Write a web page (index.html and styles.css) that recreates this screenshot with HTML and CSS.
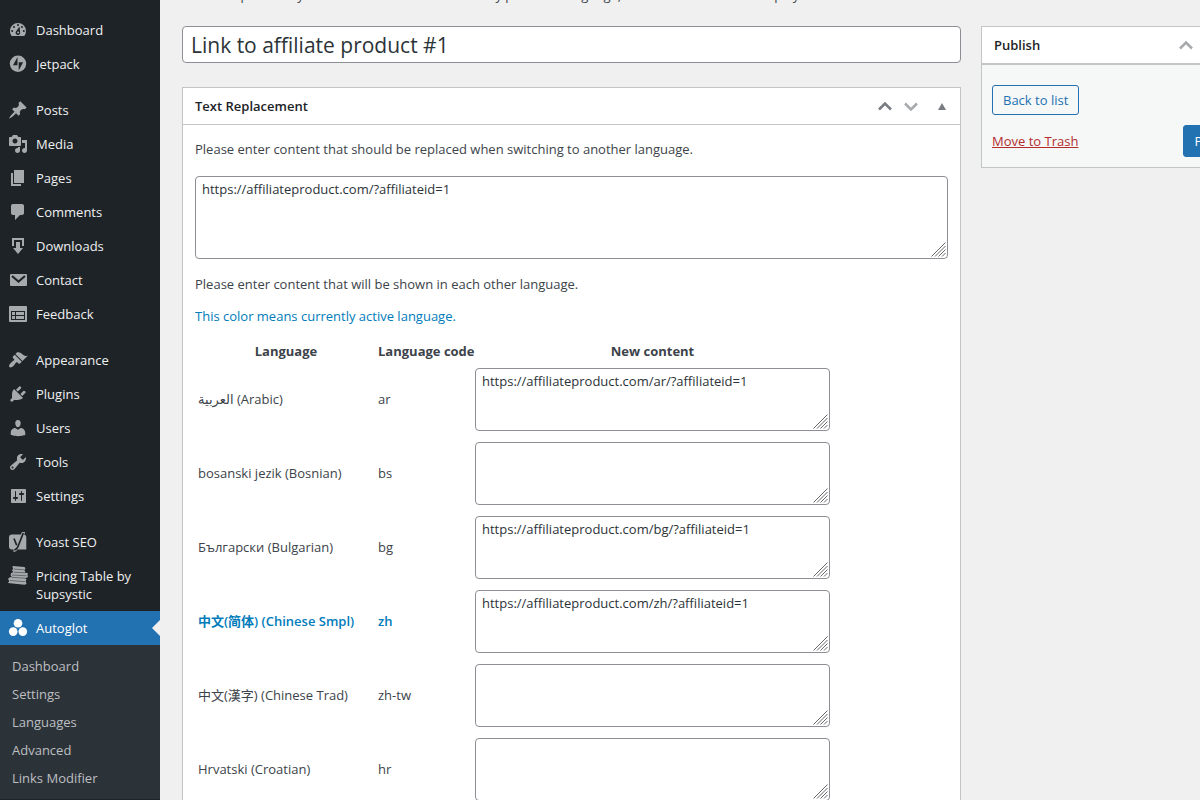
FILE: index.html
```html
<!DOCTYPE html>
<html lang="en">
<head>
<meta charset="utf-8">
<title>Link to affiliate product #1</title>
<link rel="stylesheet" href="styles.css">
</head>
<body>
<svg class="defs" aria-hidden="true">
  <symbol id="grip" viewBox="0 0 15 15"><path d="M0.5 14.5L14.5 .5M4 14.5L14.5 4M7.500 14.5L14.5 7.500M11 14.5L14.5 11"/></symbol>
  <symbol id="chev-up" viewBox="0 0 14 10"><path d="M1 8.5L7 2.5L13 8.5"/></symbol>
  <symbol id="chev-down" viewBox="0 0 14 10"><path d="M1 2.5L7 8.5L13 2.5"/></symbol>
  <symbol id="tri" viewBox="0 0 8 7"><path d="M4 0L8 7H0z"/></symbol>
</svg>
<div class="shell">
  <nav class="menu" aria-label="Main menu">
    <ul class="menu-list">
      <li><a class="item" href="#"><svg class="icon" viewBox="0 0 20 20"><path d="M3.76 16h12.48A7.96 7.96 0 0 0 18 11a8 8 0 0 0-16 0c0 1.89.66 3.63 1.76 5z"/><g class="cut"><circle cx="10" cy="5" r="1"/><circle cx="6" cy="7" r="1"/><circle cx="14" cy="7" r="1"/><circle cx="4.2" cy="11" r="1"/><circle cx="15.8" cy="11" r="1"/><path d="M11.6 6.5l.5 5.8a2.3 2.3 0 1 1-4-1.1z"/></g><circle cx="10.1" cy="12.4" r="1"/></svg><span>Dashboard</span></a></li>
      <li><a class="item" href="#"><svg class="icon" viewBox="0 0 20 20"><circle cx="10" cy="9.7" r="8.2"/><path class="cut" d="M9.500 3v8.300H5zM10.700 16.500V8.200h4.400z"/></svg><span>Jetpack</span></a></li>
      <li class="gap"><a class="item" href="#"><svg class="icon" viewBox="0 0 20 20"><path d="M10.44 3.02l1.82-1.82 6.36 6.35-1.83 1.82c-1.05-.68-2.48-.57-3.41.36l-.75.75c-.92.93-1.04 2.35-.35 3.41l-1.83 1.82-2.41-2.41-2.8 2.79c-.42.42-3.38 2.71-3.8 2.29s1.86-3.39 2.28-3.81l2.79-2.79L4.1 9.36l1.83-1.82c1.05.69 2.48.57 3.4-.36l.75-.75c.93-.92 1.05-2.35.36-3.41z"/></svg><span>Posts</span></a></li>
      <li><a class="item" href="#"><svg class="icon" viewBox="0 0 20 20"><path d="M13 11V4c0-.55-.45-1-1-1h-1.67L9 1H5L3.67 3H2c-.55 0-1 .45-1 1v7c0 .55.45 1 1 1h10c.55 0 1-.45 1-1zM7 4.5c1.38 0 2.5 1.12 2.5 2.5S8.38 9.5 7 9.5 4.5 8.38 4.5 7 5.62 4.5 7 4.5zM14 6h5v10.5c0 1.38-1.12 2.5-2.5 2.5S14 17.88 14 16.5s1.12-2.5 2.5-2.5c.17 0 .34.02.5.05V9h-3V6zm-4 8.05V13h2v3.5c0 1.38-1.12 2.5-2.5 2.5S7 17.88 7 16.5 8.12 14 9.5 14c.17 0 .34.02.5.05z"/></svg><span>Media</span></a></li>
      <li><a class="item" href="#"><svg class="icon" viewBox="0 0 20 20"><path d="M6 15V2h10v13H6zm-1 1h8v2H3V5h2v11z"/></svg><span>Pages</span></a></li>
      <li><a class="item" href="#"><svg class="icon" viewBox="0 0 20 20"><path d="M5 2h9c1.1 0 2 .9 2 2v7c0 1.1-.9 2-2 2h-2l-5 5v-5H5c-1.1 0-2-.9-2-2V4c0-1.1.9-2 2-2z"/></svg><span>Comments</span></a></li>
      <li><a class="item" href="#"><svg class="icon" viewBox="0 0 20 20"><path d="M14.01 4v6h2V2H4v8h2.01V4h8zm-2 2v6h3l-5 6-5-6h3V6h4z"/></svg><span>Downloads</span></a></li>
      <li><a class="item" href="#"><svg class="icon" viewBox="0 0 20 20"><rect x="2" y="4" width="17" height="12" rx="1"/><path class="cut-line" d="M4 6l6.5 5.6L17 6"/></svg><span>Contact</span></a></li>
      <li><a class="item" href="#"><svg class="icon" viewBox="0 0 20 20"><path fill-rule="evenodd" d="M2 2h16c.55 0 1 .45 1 1v14c0 .55-.45 1-1 1H2c-.55 0-1-.45-1-1V3c0-.55.45-1 1-1zm1 5v9h14V7zM4 8h3v3H4zm4 0h8v3H8zm-4 4h3v3H4zm4 0h8v3H8z"/></svg><span>Feedback</span></a></li>
      <li class="gap"><a class="item" href="#"><svg class="icon" viewBox="0 0 20 20"><path d="M14.48 11.06L7.41 3.99l1.5-1.5c.5-.56 2.3-.47 3.51.32 1.21.8 1.43 1.28 2.91 2.1 1.18.64 2.45 1.26 4.45.85zm-.71.71L6.7 4.7 4.93 6.47c-.39.39-.39 1.02 0 1.41l1.06 1.06c.39.39.39 1.03 0 1.42-.6.6-1.43 1.11-2.21 1.69-.35.26-.7.53-1.01.84C1.43 14.23.4 16.08 1.4 17.07c.99 1 2.84-.03 4.18-1.36.31-.31.58-.66.85-1.02.57-.78 1.08-1.61 1.69-2.21.39-.39 1.02-.39 1.41 0l1.06 1.06c.39.39 1.02.39 1.41 0z"/></svg><span>Appearance</span></a></li>
      <li><a class="item" href="#"><svg class="icon" viewBox="0 0 20 20"><path d="M13.11 4.36L9.87 7.6 8 5.73l3.24-3.24c.35-.34 1.05-.2 1.56.32.52.51.66 1.21.31 1.55zm-8 1.77l.91-1.12 9.01 9.01-1.19.84c-.71.71-2.63 1.16-3.82 1.16H6.14L4.9 17.26c-.59.59-1.54.59-2.12 0-.59-.58-.59-1.53 0-2.12l1.24-1.24v-3.88c0-1.13.4-3.19 1.09-3.89zm7.26 3.97l3.24-3.24c.34-.35 1.04-.21 1.55.31.52.51.66 1.21.31 1.55l-3.24 3.25z"/></svg><span>Plugins</span></a></li>
      <li><a class="item" href="#"><svg class="icon" viewBox="0 0 20 20"><path d="M10 9.25c-2.27 0-2.73-3.44-2.73-3.44C7 4.02 7.82 2 9.97 2c2.16 0 2.98 2.02 2.71 3.81 0 0-.41 3.44-2.68 3.44zm0 2.57L12.72 10c2.39 0 4.52 2.33 4.52 4.53v2.49s-3.65 1.13-7.24 1.13c-3.65 0-7.24-1.13-7.24-1.13v-2.49c0-2.25 1.94-4.48 4.47-4.48z"/></svg><span>Users</span></a></li>
      <li><a class="item" href="#"><svg class="icon" viewBox="0 0 20 20"><path d="M16.68 9.77c-1.34 1.34-3.3 1.67-4.95.99l-5.41 6.52c-.99.99-2.59.99-3.58 0s-.99-2.59 0-3.57l6.52-5.42c-.68-1.65-.35-3.61.99-4.95 1.28-1.28 3.12-1.62 4.72-1.06l-2.89 2.89 2.82 2.82 2.86-2.87c.53 1.58.18 3.39-1.08 4.65zM3.81 16.21c.4.39 1.04.39 1.43 0 .4-.4.4-1.04 0-1.43-.39-.4-1.03-.4-1.43 0-.39.39-.39 1.03 0 1.43z"/></svg><span>Tools</span></a></li>
      <li><a class="item" href="#"><svg class="icon" viewBox="0 0 20 20"><path d="M18 16V4c0-.55-.45-1-1-1H4c-.55 0-1 .45-1 1v12c0 .55.45 1 1 1h13c.55 0 1-.45 1-1zM8 11h1c.55 0 1 .45 1 1s-.45 1-1 1H8v1.5c0 .28-.22.5-.5.5s-.5-.22-.5-.5V13H6c-.55 0-1-.45-1-1s.45-1 1-1h1V5.5c0-.28.22-.5.5-.5s.5.22.5.5V11zm5-2h-1c-.55 0-1-.45-1-1s.45-1 1-1h1V5.5c0-.28.22-.5.5-.5s.5.22.5.5V7h1c.55 0 1 .45 1 1s-.45 1-1 1h-1v5.5c0 .28-.22.5-.5.5s-.5-.22-.5-.5V9z"/></svg><span>Settings</span></a></li>
      <li class="gap"><a class="item" href="#"><svg class="icon" viewBox="0 0 20 20"><path d="M4 2.500h8.800L14 0h3.200l-1 2.600C17.600 3 18.300 4 18.300 5.500V17.500H9.500C8.700 19 7.500 19.800 5.500 20v-2.500H4a3 3 0 0 1-3-3v-9a3 3 0 0 1 3-3z"/><path class="cut-line thin" d="M6 6.500l2.700 6.800M15.300 1L10 14.500C9.200 16.600 8.300 17.700 6.300 18"/></svg><span>Yoast SEO</span></a></li>
      <li><a class="item" href="#"><svg class="icon" viewBox="0 0 20 20"><path d="M4.500 0l12 1 1 1.500-1.200 1.500 1 1.500-.8 1 3.500.8-.6 1.500.6 2-1.200 1L17 12l1.500 1.500-.8 1.500.8 3-2 .8L0 17l1.200-2L0 12.700l2-1.400 1.700-.3L2.500 9l.8-2 2.200-1L4 4.500 5 3z"/><path class="seam" d="M5.500 3l10.500.8M6 6.300l11 .4M4 9l14.500.8M3.500 11.300l13.500.9M2 14.500l15 1.200"/></svg><span>Pricing Table by Supsystic</span></a></li>
      <li>
        <a class="item current" href="#" aria-current="page"><svg class="icon" viewBox="0 0 20 20"><circle cx="10" cy="5.300" r="4.300"/><circle cx="5.200" cy="13.600" r="4.300"/><circle cx="14.800" cy="13.600" r="4.300"/></svg><span>Autoglot</span></a>
        <ul class="submenu">
          <li><a href="#">Dashboard</a></li>
          <li><a href="#">Settings</a></li>
          <li><a href="#">Languages</a></li>
          <li><a href="#">Advanced</a></li>
          <li><a href="#">Links Modifier</a></li>
        </ul>
      </li>
    </ul>
  </nav>

  <main class="content">
    <p class="intro">This item places any link or text when a user is in any provided language, so the new content is displayed.</p>
    <div class="columns">
      <div class="primary">
        <input class="title" type="text" aria-label="Title" value="Link to affiliate product #1">
        <section class="box">
          <header class="box-head">
            <h2>Text Replacement</h2>
            <div class="handles">
              <button type="button" aria-label="Move up"><svg class="chev" width="14" height="10"><use href="#chev-up"/></svg></button>
              <button type="button" aria-label="Move down"><svg class="chev faded" width="14" height="10"><use href="#chev-down"/></svg></button>
              <button class="toggle" type="button" aria-label="Toggle panel"><svg class="tri" width="8" height="7"><use href="#tri"/></svg></button>
            </div>
          </header>
          <div class="box-body">
            <p><label for="source">Please enter content that should be replaced when switching to another language.</label></p>
            <div class="area area-wide"><textarea id="source">https://affiliateproduct.com/?affiliateid=1</textarea><svg class="grip"><use href="#grip"/></svg></div>
            <p>Please enter content that will be shown in each other language.</p>
            <p class="active-note">This color means currently active language.</p>
            <table class="languages">
              <thead>
                <tr><th class="col-name">Language</th><th class="col-code">Language code</th><th class="col-text">New content</th></tr>
              </thead>
              <tbody>
                <tr><td><label for="t-ar">العربية (Arabic)</label></td><td>ar</td><td><div class="area"><textarea id="t-ar">https://affiliateproduct.com/ar/?affiliateid=1</textarea><svg class="grip"><use href="#grip"/></svg></div></td></tr>
                <tr><td><label for="t-bs">bosanski jezik (Bosnian)</label></td><td>bs</td><td><div class="area"><textarea id="t-bs"></textarea><svg class="grip"><use href="#grip"/></svg></div></td></tr>
                <tr><td><label for="t-bg">Български (Bulgarian)</label></td><td>bg</td><td><div class="area"><textarea id="t-bg">https://affiliateproduct.com/bg/?affiliateid=1</textarea><svg class="grip"><use href="#grip"/></svg></div></td></tr>
                <tr class="active"><td><label for="t-zh">中文(简体) (Chinese Smpl)</label></td><td>zh</td><td><div class="area"><textarea id="t-zh">https://affiliateproduct.com/zh/?affiliateid=1</textarea><svg class="grip"><use href="#grip"/></svg></div></td></tr>
                <tr><td><label for="t-tw">中文(漢字) (Chinese Trad)</label></td><td>zh-tw</td><td><div class="area"><textarea id="t-tw"></textarea><svg class="grip"><use href="#grip"/></svg></div></td></tr>
                <tr><td><label for="t-hr">Hrvatski (Croatian)</label></td><td>hr</td><td><div class="area"><textarea id="t-hr"></textarea><svg class="grip"><use href="#grip"/></svg></div></td></tr>
              </tbody>
            </table>
          </div>
        </section>
      </div>
      <aside class="box publish">
        <header class="box-head">
          <h2>Publish</h2>
          <div class="handles">
            <button type="button" aria-label="Move up"><svg class="chev faded" width="14" height="10"><use href="#chev-up"/></svg></button>
            <button type="button" aria-label="Move down"><svg class="chev faded" width="14" height="10"><use href="#chev-down"/></svg></button>
            <button class="toggle" type="button" aria-label="Toggle panel"><svg class="tri" width="8" height="7"><use href="#tri"/></svg></button>
          </div>
        </header>
        <div class="publish-body">
          <button class="button" type="button">Back to list</button>
          <div class="publish-actions">
            <a class="trash" href="#">Move to Trash</a>
            <button class="button primary-button" type="button">Publish</button>
          </div>
        </div>
      </aside>
    </div>
  </main>
</div>
</body>
</html>
```
FILE: styles.css
```css
* { box-sizing: border-box; }

body {
  margin: 0;
  background: #f0f0f1;
  color: #3c434a;
  font: 13px/20px "Open Sans", "DejaVu Sans", "Noto Sans CJK SC", sans-serif;
}

button, input, textarea { font: inherit; color: inherit; margin: 0; }
ul { list-style: none; margin: 0; padding: 0; }
p, h2 { margin: 0; }

.defs { display: none; }

.shell { display: flex; height: 100vh; overflow: hidden; }

/* Side menu */
.menu { flex: none; width: 160px; background: #1d2327; }
.menu-list { padding-top: 13px; }
.gap { margin-top: 12px; }

.item {
  position: relative;
  display: flex;
  gap: 8px;
  padding: 8px;
  color: #f0f0f1;
  line-height: 18px;
  text-decoration: none;
}
.icon { flex: none; width: 20px; height: 20px; margin: -1px 0; fill: #a7aaad; }
.cut { fill: #1d2327; }
.cut-line { fill: none; stroke: #1d2327; stroke-width: 2; }
.thin { stroke-width: 1.7; }
.seam { fill: none; stroke: #666b70; stroke-width: 1; }

.current { background: #2271b1; color: #fff; }
.current .icon { fill: #fff; }
.current::after {
  content: "";
  position: absolute;
  right: 0;
  top: 9px;
  border: 8px solid transparent;
  border-left: 0;
  border-right-color: #f0f0f1;
}

.submenu { background: #2c3338; padding: 7px 0; }
.submenu a {
  display: block;
  padding: 5px 12px;
  color: #bdbfc2;
  line-height: 18px;
  text-decoration: none;
}

/* Editor */
.content { flex: 1; min-width: 0; padding-left: 22px; }
.intro { margin-top: -15px; }
.columns {
  display: grid;
  grid-template-columns: minmax(0, 1fr) 281px;
  align-items: start;
  gap: 20px;
  margin: 21px -62px 0 0;
}
.title {
  display: block;
  width: 100%;
  height: 37px;
  padding: 0 8px;
  border: 1px solid #8c8f94;
  border-radius: 4px;
  background: #fff;
  color: #2c3338;
  font-size: 21px;
}

.box { background: #fff; border: 1px solid #c3c4c7; }
.primary .box { margin-top: 24px; }
.box-head {
  display: flex;
  align-items: center;
  justify-content: space-between;
  height: 37px;
  padding-left: 12px;
  border-bottom: 1px solid #c3c4c7;
}
.box-head h2 { color: #1d2327; font-size: 13px; font-weight: 600; }
.handles { display: flex; align-items: center; }
.handles button {
  display: grid;
  place-items: center;
  width: 26px;
  height: 36px;
  padding: 0;
  border: 0;
  background: none;
}
.handles .toggle { width: 36px; }
.chev { fill: none; stroke: #787c82; stroke-width: 2.5; }
.faded { stroke: #a7aaad; }
.tri { fill: #787c82; }

.box-body { display: flex; flex-direction: column; gap: 12px; padding: 14px 12px; }

.area { position: relative; height: 63px; }
.area textarea {
  display: block;
  width: 100%;
  height: 100%;
  padding: 2px 6px;
  border: 1px solid #8c8f94;
  border-radius: 4px;
  background: #fff;
  color: #2c3338;
  resize: none;
}
.area-wide { height: 83px; margin: 5px 0 3px; }
.grip {
  position: absolute;
  right: 2px;
  bottom: 2px;
  width: 15px;
  height: 15px;
  fill: none;
  stroke: #666;
  stroke-width: 1;
}
.active-note { color: #007cba; }

.languages { width: 638px; table-layout: fixed; border-spacing: 2px; }
.languages th { padding: 1px 1px 0; }
.languages td { height: 72px; padding: 1px; }
.col-name { width: 178px; }
.col-code { width: 95px; white-space: nowrap; }
.active { color: #007cba; font-weight: 600; }
.active textarea { font-weight: 400; }

/* Publish panel */
.publish .box-head { border-bottom-width: 2px; height: 38px; }
.publish-body { padding: 20px 10px 10px; background: #f6f7f7; }
.button {
  height: 30px;
  padding: 0 10px;
  border: 1px solid #2271b1;
  border-radius: 3px;
  background: #f6f7f7;
  color: #2271b1;
}
.publish-actions {
  display: flex;
  align-items: center;
  justify-content: space-between;
  margin-top: 10px;
}
.trash { color: #b32d2e; }
.primary-button { height: 32px; padding: 0 11px; background: #2271b1; color: #fff; }
```
